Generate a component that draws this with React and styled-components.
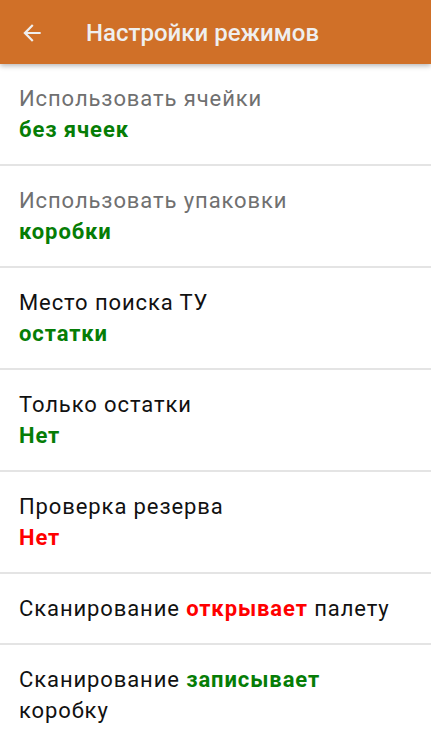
import React from "react";
import styled, { createGlobalStyle } from "styled-components";

const GlobalStyle = createGlobalStyle`
  html, body {
    margin: 0;
    padding: 0;
    background: #fff;
  }
  body {
    font-family: Roboto, "Noto Sans", sans-serif;
  }
`;

const Screen = styled.div`
  width: 431px;
  height: 738px;
  overflow: hidden;
  background: #fff;
  display: flex;
  flex-direction: column;
`;

const Toolbar = styled.div`
  position: relative;
  z-index: 2;
  flex: 0 0 auto;
  height: 64px;
  padding-top: 2px;
  box-sizing: border-box;
  display: flex;
  align-items: center;
  background: #d07028;
  box-shadow: 0px 2px 5px rgba(0, 0, 0, 0.28);
`;

const BackButton = styled.div`
  width: 86px;
  display: flex;
  align-items: center;
  padding-left: 19px;
  box-sizing: border-box;
`;

const Title = styled.div`
  color: #efefef;
  font-family: Roboto, sans-serif;
  font-size: 24px;
  font-weight: 500;
`;

const List = styled.div`
  display: flex;
  flex-direction: column;
`;

const Row = styled.div`
  padding: 19px 19px;
  border-bottom: 2px solid #e4e4e4;
  font-family: Roboto, sans-serif;
  font-size: 22px;
  letter-spacing: 0.9px;
  line-height: 31px;
  color: ${(p) => (p.$disabled ? "#707070" : "#111")};
`;

const Value = styled.div`
  font-weight: 700;
  color: ${(p) => (p.$tone === "red" ? "#ff0000" : "#067d06")};
`;

const Accent = styled.span`
  font-weight: 700;
  color: ${(p) => (p.$tone === "red" ? "#ff0000" : "#067d06")};
`;

const settings = [
  { label: "Использовать ячейки", value: "без ячеек", disabled: true },
  { label: "Использовать упаковки", value: "коробки", disabled: true },
  { label: "Место поиска ТУ", value: "остатки" },
  { label: "Только остатки", value: "Нет" },
  { label: "Проверка резерва", value: "Нет", tone: "red" },
];

const App = () => {
  return (
    <Screen>
      <GlobalStyle />
      <Toolbar>
        <BackButton>
          <svg width="26" height="26" viewBox="0 0 24 24">
            <path
              d="M20 11H7.83l5.59-5.59L12 4l-8 8 8 8 1.41-1.41L7.83 13H20v-2z"
              fill="#efefef"
            />
          </svg>
        </BackButton>
        <Title>Настройки режимов</Title>
      </Toolbar>

      <List>
        {settings.map((s) => (
          <Row key={s.label} $disabled={s.disabled}>
            <div>{s.label}</div>
            <Value $tone={s.tone}>{s.value}</Value>
          </Row>
        ))}
        <Row>
          Сканирование <Accent $tone="red">открывает</Accent> палету
        </Row>
        <Row>
          Сканирование <Accent>записывает</Accent> коробку
        </Row>
      </List>
    </Screen>
  );
};

export default App;
